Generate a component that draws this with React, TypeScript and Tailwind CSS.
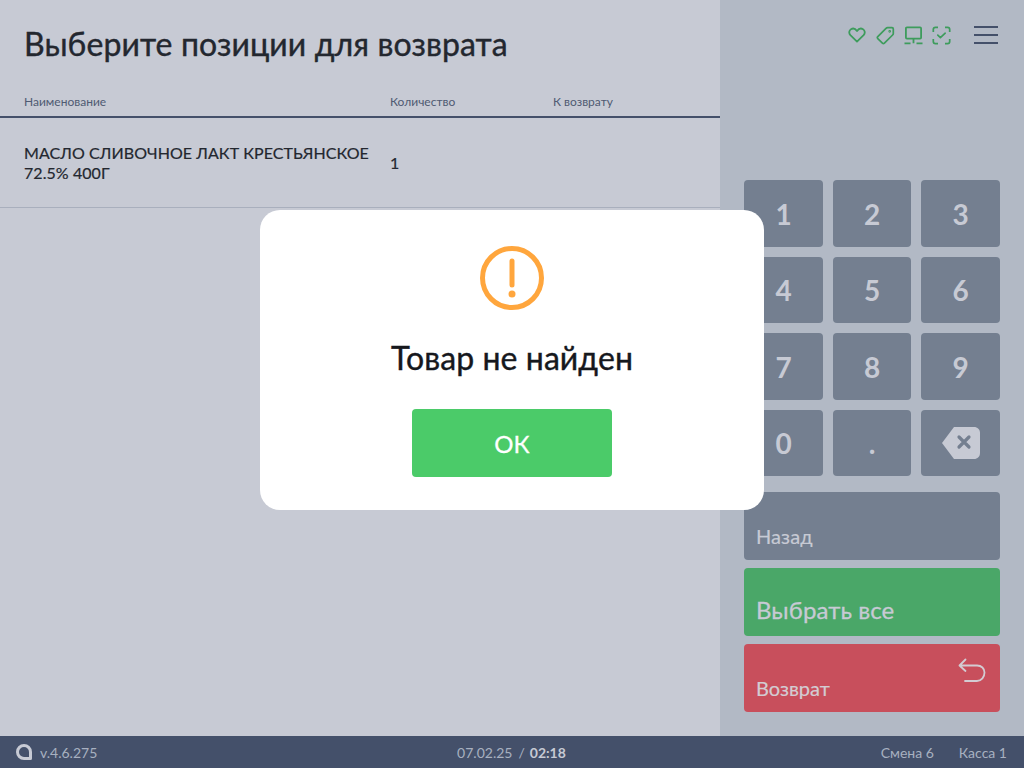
import React from 'react';

const KEYS = ['1', '2', '3', '4', '5', '6', '7', '8', '9', '0', '.'];

const TopIcons: React.FC = () => (
  <div className="flex items-center justify-end h-[30px] mt-[20px] mr-[2px] text-[#3d9c5c]">
    <svg width="18" height="16" viewBox="0 0 18 16" fill="none" stroke="currentColor" strokeWidth="1.8" className="shrink-0">
      <path d="M9 14.6 L2.4 8.2 C0.6 6.2 1 3.4 3 2.2 C5 1 7.4 1.7 9 4 C10.6 1.7 13 1 15 2.2 C17 3.4 17.4 6.2 15.6 8.2 Z" strokeLinejoin="round" />
    </svg>
    <svg width="19" height="19" viewBox="0 0 19 19" fill="none" stroke="currentColor" strokeWidth="1.7" className="ml-[10px] shrink-0">
      <path d="M1.8 10.6 L10 2.4 C10.5 1.9 11 1.7 11.6 1.7 L16 1.7 C16.8 1.7 17.3 2.2 17.3 3 L17.3 7.4 C17.3 8 17.1 8.5 16.6 9 L8.4 17.2 C7.8 17.8 7 17.8 6.4 17.2 L1.8 12.6 C1.2 12 1.2 11.2 1.8 10.6 Z" strokeLinejoin="round" />
      <circle cx="13.7" cy="5.3" r="0.5" />
    </svg>
    <svg width="19" height="19" viewBox="0 0 19 19" fill="none" stroke="currentColor" strokeWidth="1.8" className="ml-[9px] shrink-0">
      <rect x="1.9" y="1.4" width="15.2" height="11.2" rx="1" />
      <path d="M9.5 12.6 V17.3 M0.5 17.3 H6.5 M12.5 17.3 H18.5" />
    </svg>
    <svg width="19" height="19" viewBox="0 0 19 19" fill="none" stroke="currentColor" strokeWidth="1.7" className="ml-[9px] shrink-0">
      <path d="M1.3 6 V3.5 C1.3 2.2 2.2 1.3 3.5 1.3 H6 M13 1.3 H15.5 C16.8 1.3 17.7 2.2 17.7 3.5 V6 M17.7 13 V15.5 C17.7 16.8 16.8 17.7 15.5 17.7 H13 M6 17.7 H3.5 C2.2 17.7 1.3 16.8 1.3 15.5 V13" />
      <path d="M5.8 9.2 L8.4 11.6 L13.2 7.2" strokeLinecap="round" strokeLinejoin="round" />
    </svg>
    <div className="ml-[23px] flex flex-col gap-[6px] shrink-0">
      <div className="w-[24px] h-[2px] bg-[#44506a]" />
      <div className="w-[24px] h-[2px] bg-[#44506a]" />
      <div className="w-[24px] h-[2px] bg-[#44506a]" />
    </div>
  </div>
);

const App: React.FC = () => {
  return (
    <div className="relative w-[1024px] h-[768px] overflow-hidden flex flex-col font-['Lato','Noto_Sans',sans-serif]">
      <div className="flex flex-1 min-h-0">
        {/* left table */}
        <div className="w-[720px] bg-[#c7cad4]">
          <h1 className="pl-[24px] pt-[24px] text-[32px] leading-[40px] tracking-[0.1px] [-webkit-text-stroke:0.4px] text-[#23272f]">Выберите позиции для возврата</h1>
          <div className="flex items-end h-[54px] pb-[7px] pl-[24px] text-[12px] leading-[15px] text-[#4f5a72] border-b-2 border-[#44506a]">
            <div className="w-[366px]">Наименование</div>
            <div className="w-[163px]">Количество</div>
            <div>К возврату</div>
          </div>
          <div className="flex items-center h-[90px] pl-[24px] text-[16px] leading-[20px] tracking-[0.06px] [-webkit-text-stroke:0.2px] text-[#23272f] border-b border-[#a9afbd]">
            <div className="w-[366px]">МАСЛО СЛИВОЧНОЕ ЛАКТ КРЕСТЬЯНСКОЕ<br />72.5% 400Г</div>
            <div>1</div>
          </div>
        </div>

        {/* right panel */}
        <div className="w-[304px] bg-[#b2b9c5] pl-[24px] pr-[24px]">
          <TopIcons />
          <div className="mt-[130px] grid grid-cols-[79px_78px_79px] gap-x-[10px] gap-y-[10px] grid-rows-[67px_66px_67px_66px]">
            {KEYS.map((k) => (
              <div key={k} className="flex items-center justify-center rounded-[4px] bg-[#747f90] text-[28px] font-bold text-[#c7cad4]">{k}</div>
            ))}
            <div className="flex items-center justify-center rounded-[4px] bg-[#747f90]">
              <svg width="38" height="32" viewBox="0 0 38 32" fill="none">
                <path d="M12 0 H32 C35.5 0 38 2.5 38 6 V26 C38 29.500 35.5 32 32 32 H12 L0 16 Z" fill="#c7cad4" />
                <path d="M17 10 L27 20 M27 10 L17 20" stroke="#747f90" strokeWidth="3.200" strokeLinecap="round" />
              </svg>
            </div>
          </div>
          <div className="mt-[16px] flex flex-col gap-[8px]">
            <div className="h-[68px] rounded-[4px] bg-[#747f90] pl-[12px] pb-[12px] flex items-end text-[20px] leading-[24px] tracking-[0.1px] [-webkit-text-stroke:0.2px] text-[#c7cad4]">Назад</div>
            <div className="h-[68px] rounded-[4px] bg-[#4aa768] pl-[12px] pb-[12px] flex items-end text-[24px] leading-[28px] tracking-[0.1px] [-webkit-text-stroke:0.3px] text-[#c7cad4]">Выбрать все</div>
            <div className="relative h-[68px] rounded-[4px] bg-[#c84f5c] pl-[12px] pb-[12px] flex items-end text-[20px] leading-[24px] [-webkit-text-stroke:0.2px] text-[#d3ccd2]">
              Возврат
              <svg className="absolute right-[14px] top-[14px]" width="28" height="26" viewBox="0 0 28 26" fill="none" stroke="#d3ccd2" strokeWidth="1.800" strokeLinecap="round" strokeLinejoin="round">
                <path d="M7.500 1.500 L1.500 7.500 L7.500 13 M1.500 7.500 H19 C23.500 7.500 26.500 10.500 26.500 14.500 C26.500 19 23.500 23 19 23 H7" />
              </svg>
            </div>
          </div>
        </div>
      </div>

      {/* status bar */}
      <div className="h-[32px] bg-[#44506a] flex items-center pl-[16px] pr-[17px] text-[14px] text-[#a8b0c0]">
        <div className="flex-1 flex items-center gap-[8px]">
          <svg width="16" height="16" viewBox="0 0 16 16" fill="none">
            <path d="M8 1.500 C4.400 1.500 1.500 4.400 1.500 8 C1.500 11.600 4.400 14.500 8 14.500 H14.500 V8 C14.500 4.400 11.600 1.500 8 1.500 Z" stroke="#c7cad4" strokeWidth="3" strokeLinejoin="round" />
          </svg>
          <span>v.4.6.275</span>
        </div>
        <div className="flex-1 text-center">07.02.25<span className="ml-[6px] mr-[5px]">/</span><span className="font-bold text-[#c7cad4]">02:18</span></div>
        <div className="flex-1 flex justify-end gap-[25px]">
          <span>Смена 6</span>
          <span>Касса 1</span>
        </div>
      </div>

      {/* dialog */}
      <div className="absolute left-[260px] top-[210px] w-[504px] h-[300px] rounded-[20px] bg-white flex flex-col items-center pt-[36px]">
        <svg width="64" height="64" viewBox="0 0 64 64" fill="none">
          <circle cx="32" cy="32" r="29.500" stroke="#ffa63d" strokeWidth="5" />
          <path d="M32 15 V39" stroke="#ffa63d" strokeWidth="5" strokeLinecap="round" />
          <circle cx="32" cy="48" r="3.500" fill="#ffa63d" />
        </svg>
        <div className="mt-[28px] text-[32px] leading-[40px] tracking-[0.07px] [-webkit-text-stroke:0.4px] text-[#16181d]">Товар не найден</div>
        <div className="mt-[31px] w-[200px] h-[68px] pt-[2px] rounded-[4px] bg-[#4bcb69] flex items-center justify-center text-[24px] [-webkit-text-stroke:0.3px] text-white">ОК</div>
      </div>
    </div>
  );
};

export default App;
